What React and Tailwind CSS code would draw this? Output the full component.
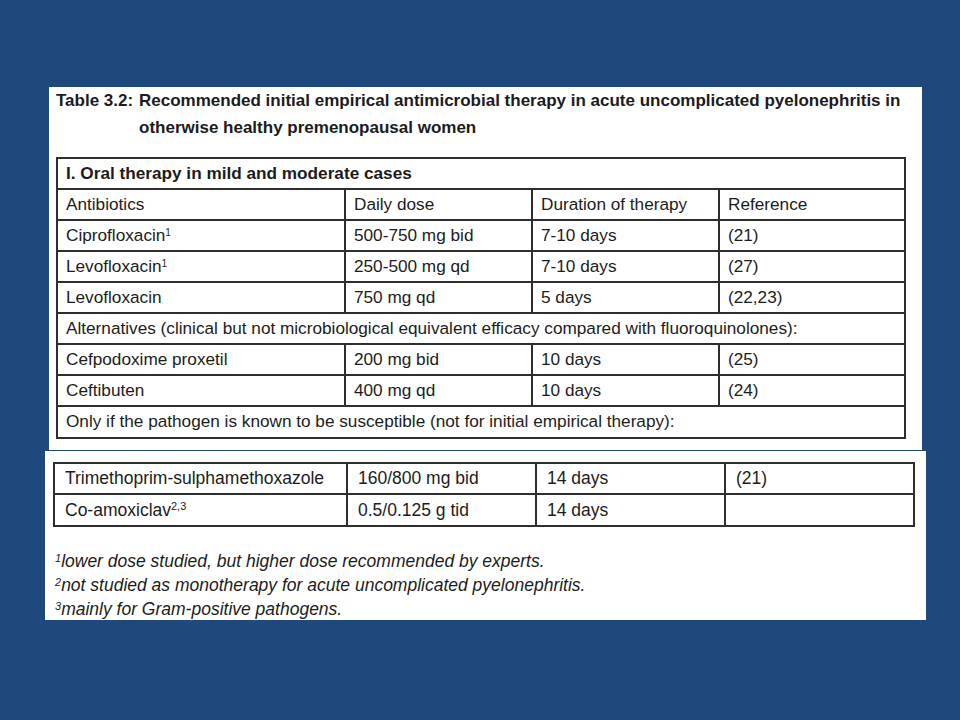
const rows = [
  ["Ciprofloxacin", "1", "500-750 mg bid", "7-10 days", "(21)"],
  ["Levofloxacin", "1", "250-500 mg qd", "7-10 days", "(27)"],
  ["Levofloxacin", "", "750 mg qd", "5 days", "(22,23)"],
];

const altRows = [
  ["Cefpodoxime proxetil", "200 mg bid", "10 days", "(25)"],
  ["Ceftibuten", "400 mg qd", "10 days", "(24)"],
];

const cell = "border-2 border-[#2e2e2e] h-[31px] px-[8px] py-0 text-left align-middle whitespace-nowrap";

const App = () => {
  return (
    <div className="w-[960px] h-[720px] bg-[#1f497d] overflow-hidden text-[#1c1c1c] font-['Liberation_Sans',Arial,sans-serif]">
      {/* top sheet */}
      <div className="ml-[49px] mt-[87px] w-[873px] h-[363px] bg-white">
        <div className="flex pl-[7px] text-[17px] font-bold leading-[27px] whitespace-nowrap">
          <span className="w-[83px] shrink-0">Table 3.2:</span>
          <span>
            Recommended initial empirical antimicrobial therapy in acute uncomplicated pyelonephritis in
            <br />
            otherwise healthy premenopausal women
          </span>
        </div>

        <table className="ml-[7px] mt-[16px] w-[848px] table-fixed border-collapse text-[17.2px]">
          <colgroup>
            <col className="w-[288px]" />
            <col className="w-[187px]" />
            <col className="w-[187px]" />
            <col className="w-[186px]" />
          </colgroup>
          <tbody>
            <tr>
              <td colSpan={4} className={cell + " font-bold"}>I. Oral therapy in mild and moderate cases</td>
            </tr>
            <tr>
              <td className={cell}>Antibiotics</td>
              <td className={cell}>Daily dose</td>
              <td className={cell}>Duration of therapy</td>
              <td className={cell}>Reference</td>
            </tr>
            {rows.map((r, i) => (
              <tr key={i}>
                <td className={cell}>
                  {r[0]}
                  {r[1] ? <sup className="text-[10px]">{r[1]}</sup> : null}
                </td>
                <td className={cell}>{r[2]}</td>
                <td className={cell}>{r[3]}</td>
                <td className={cell}>{r[4]}</td>
              </tr>
            ))}
            <tr>
              <td colSpan={4} className={cell}>
                Alternatives (clinical but not microbiological equivalent efficacy compared with fluoroquinolones):
              </td>
            </tr>
            {altRows.map((r, i) => (
              <tr key={i}>
                {r.map((c, j) => (
                  <td key={j} className={cell}>{c}</td>
                ))}
              </tr>
            ))}
            <tr>
              <td colSpan={4} className={cell + " h-[32px]"}>
                Only if the pathogen is known to be susceptible (not for initial empirical therapy):
              </td>
            </tr>
          </tbody>
        </table>
      </div>

      {/* bottom sheet */}
      <div className="ml-[45px] mt-[1px] w-[881px] h-[169px] bg-white pt-[11px]">
        <table className="ml-[8px] w-[860px] table-fixed border-collapse text-[17.5px]">
          <colgroup>
            <col className="w-[293px]" />
            <col className="w-[189px]" />
            <col className="w-[189px]" />
            <col className="w-[189px]" />
          </colgroup>
          <tbody>
            <tr>
              <td className={cell + " px-[10px]"}>Trimethoprim-sulphamethoxazole</td>
              <td className={cell + " px-[10px]"}>160/800 mg bid</td>
              <td className={cell + " px-[10px]"}>14 days</td>
              <td className={cell + " px-[10px]"}>(21)</td>
            </tr>
            <tr>
              <td className={cell + " px-[10px] h-[32px]"}>
                Co-amoxiclav<sup className="text-[11px]">2,3</sup>
              </td>
              <td className={cell + " px-[10px]"}>0.5/0.125 g tid</td>
              <td className={cell + " px-[10px]"}>14 days</td>
              <td className={cell + " px-[10px]"}></td>
            </tr>
          </tbody>
        </table>

        <div className="ml-[10px] mt-[22px] text-[17.5px] italic leading-[24px] whitespace-nowrap">
          <p><sup className="text-[11px]">1</sup>lower dose studied, but higher dose recommended by experts.</p>
          <p><sup className="text-[11px]">2</sup>not studied as monotherapy for acute uncomplicated pyelonephritis.</p>
          <p><sup className="text-[11px]">3</sup>mainly for Gram-positive pathogens.</p>
        </div>
      </div>
    </div>
  );
};

export default App;
